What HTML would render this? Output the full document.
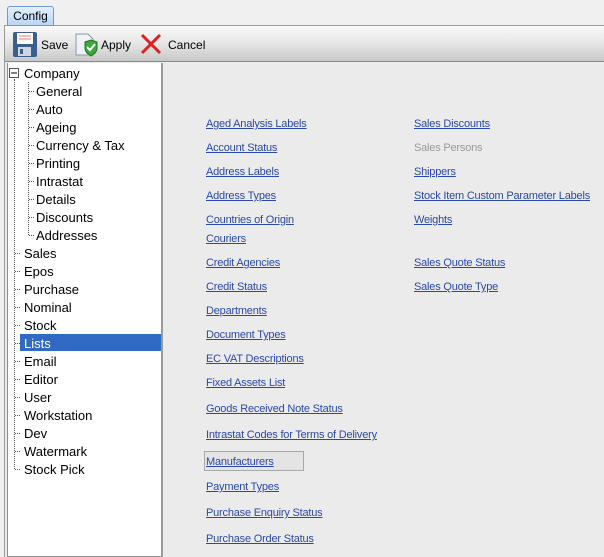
<!DOCTYPE html>
<html><head><style>
*{margin:0;padding:0;box-sizing:border-box}
body{width:604px;height:557px;background:#f0f0f0;font-family:"Liberation Sans","DejaVu Sans",sans-serif;position:relative;overflow:hidden}
.tab{position:absolute;left:7px;top:6px;width:47px;height:20px;border:1px solid #6f9bd0;border-radius:3px 3px 0 0;background:linear-gradient(#e3f0fd,#b9d6f6);font-size:12px;text-align:center;line-height:18px;color:#000}
.frame{position:absolute;left:4px;top:25px;width:600px;height:532px;border-top:1px solid #9a9a9a;border-left:1px solid #9a9a9a;background:#ebebeb}
.tb{position:absolute;left:5px;top:26px;width:599px;height:36px;background:linear-gradient(#fafafa,#e6e6e6 50%,#c8c8c8);border-bottom:1px solid #8a8a8a}
.tbt{position:absolute;top:38px;font-size:12px;color:#000}
.tree{position:absolute;left:7px;top:63px;width:156px;height:494px;background:#fff;border:1px solid #8f8f8f;border-top:none;border-right:2px solid #9a9a9a}
.ti{position:absolute;font-size:13px;color:#000;line-height:17px}
.sel{position:absolute;left:20px;top:334px;width:141px;height:17px;background:#316ac5}
.lk{position:absolute;font-size:11px;letter-spacing:-0.2px;color:#2a48a8;text-decoration:underline;white-space:nowrap}
.dot{position:absolute;border-left:1px dotted #555}
.hd{position:absolute;border-top:1px dotted #555;width:5px}
</style></head><body>
<div class="frame"></div>
<div class="tab">Config</div>
<div class="tb"></div>
<svg style="position:absolute;left:12px;top:31px" width="26" height="27" viewBox="0 0 26 27"><rect x="1" y="1" width="24" height="25" rx="2" fill="#3c5e8c"/><rect x="5" y="2" width="16" height="11" fill="#fff"/><line x1="7" y1="5" x2="19" y2="5" stroke="#e77" /><line x1="7" y1="8" x2="19" y2="8" stroke="#e77"/><rect x="6" y="16" width="13" height="9" fill="#cfd6de"/><rect x="8" y="18" width="3" height="5" fill="#3c5e8c"/></svg>
<div class="tbt" style="left:41px">Save</div>
<svg style="position:absolute;left:73px;top:31px" width="26" height="26" viewBox="0 0 26 26"><path d="M3 3h12l5 5v16H3z" fill="#eef2f6" stroke="#8a97a8"/><path d="M12 11l6-2 6 2v6c0 4-3 6-6 8-3-2-6-4-6-8z" fill="#3aa83a" stroke="#207020"/><path d="M14 16l3 3 5-6" stroke="#fff" stroke-width="2" fill="none"/></svg>
<div class="tbt" style="left:101px">Apply</div>
<svg style="position:absolute;left:140px;top:33px" width="22" height="22" viewBox="0 0 22 22"><path d="M2 2L20 20M20 2L2 20" stroke="#e02020" stroke-width="3"/></svg>
<div class="tbt" style="left:168px">Cancel</div>
<div class="tree"></div>
<div class="sel"></div>
<svg style="position:absolute;left:9px;top:68px" width="11" height="11"><rect x="0.5" y="0.5" width="9" height="9" fill="#fff" stroke="#555"/><line x1="2" y1="5" x2="8" y2="5" stroke="#000"/></svg>
<div class="dot" style="left:14px;top:79px;height:390px"></div>
<div class="dot" style="left:28px;top:82px;height:153px"></div>
<div class="ti" style="left:24px;top:65px">Company</div>
<div class="ti" style="left:36px;top:83px">General</div>
<div class="ti" style="left:36px;top:101px">Auto</div>
<div class="ti" style="left:36px;top:119px">Ageing</div>
<div class="ti" style="left:36px;top:137px">Currency &amp; Tax</div>
<div class="ti" style="left:36px;top:155px">Printing</div>
<div class="ti" style="left:36px;top:173px">Intrastat</div>
<div class="ti" style="left:36px;top:191px">Details</div>
<div class="ti" style="left:36px;top:209px">Discounts</div>
<div class="ti" style="left:36px;top:227px">Addresses</div>
<div class="hd" style="left:29px;top:91px"></div><div class="hd" style="left:29px;top:109px"></div><div class="hd" style="left:29px;top:127px"></div><div class="hd" style="left:29px;top:145px"></div><div class="hd" style="left:29px;top:163px"></div><div class="hd" style="left:29px;top:181px"></div><div class="hd" style="left:29px;top:199px"></div><div class="hd" style="left:29px;top:217px"></div><div class="hd" style="left:29px;top:235px"></div>
<div class="hd" style="left:15px;top:253px"></div><div class="hd" style="left:15px;top:271px"></div><div class="hd" style="left:15px;top:289px"></div><div class="hd" style="left:15px;top:307px"></div><div class="hd" style="left:15px;top:325px"></div><div class="hd" style="left:15px;top:343px"></div><div class="hd" style="left:15px;top:361px"></div><div class="hd" style="left:15px;top:379px"></div><div class="hd" style="left:15px;top:397px"></div><div class="hd" style="left:15px;top:415px"></div><div class="hd" style="left:15px;top:433px"></div><div class="hd" style="left:15px;top:451px"></div><div class="hd" style="left:15px;top:469px"></div>
<div class="ti" style="left:24px;top:245px">Sales</div>
<div class="ti" style="left:24px;top:263px">Epos</div>
<div class="ti" style="left:24px;top:281px">Purchase</div>
<div class="ti" style="left:24px;top:299px">Nominal</div>
<div class="ti" style="left:24px;top:317px">Stock</div>
<div class="ti" style="left:24px;top:335px;color:#fff">Lists</div>
<div class="ti" style="left:24px;top:353px">Email</div>
<div class="ti" style="left:24px;top:371px">Editor</div>
<div class="ti" style="left:24px;top:389px">User</div>
<div class="ti" style="left:24px;top:407px">Workstation</div>
<div class="ti" style="left:24px;top:425px">Dev</div>
<div class="ti" style="left:24px;top:443px">Watermark</div>
<div class="ti" style="left:24px;top:461px">Stock Pick</div>
<div style="position:absolute;left:204px;top:451px;width:100px;height:20px;border:1px solid #a8a8a8;background:#e4e4e4"></div>
<div class="lk" style="left:206px;top:118px">Aged Analysis Labels</div>
<div class="lk" style="left:206px;top:142px">Account Status</div>
<div class="lk" style="left:206px;top:166px">Address Labels</div>
<div class="lk" style="left:206px;top:190px">Address Types</div>
<div class="lk" style="left:206px;top:214px">Countries of Origin</div>
<div class="lk" style="left:206px;top:233px">Couriers</div>
<div class="lk" style="left:206px;top:257px">Credit Agencies</div>
<div class="lk" style="left:206px;top:281px">Credit Status</div>
<div class="lk" style="left:206px;top:305px">Departments</div>
<div class="lk" style="left:206px;top:329px">Document Types</div>
<div class="lk" style="left:206px;top:353px">EC VAT Descriptions</div>
<div class="lk" style="left:206px;top:377px">Fixed Assets List</div>
<div class="lk" style="left:206px;top:403px">Goods Received Note Status</div>
<div class="lk" style="left:206px;top:429px">Intrastat Codes for Terms of Delivery</div>
<div class="lk" style="left:206px;top:456px">Manufacturers</div>
<div class="lk" style="left:206px;top:481px">Payment Types</div>
<div class="lk" style="left:206px;top:507px">Purchase Enquiry Status</div>
<div class="lk" style="left:206px;top:533px">Purchase Order Status</div>
<div class="lk" style="left:414px;top:118px">Sales Discounts</div>
<div class="lk" style="left:414px;top:142px;color:#999;text-decoration:none">Sales Persons</div>
<div class="lk" style="left:414px;top:166px">Shippers</div>
<div class="lk" style="left:414px;top:190px">Stock Item Custom Parameter Labels</div>
<div class="lk" style="left:414px;top:214px">Weights</div>
<div class="lk" style="left:414px;top:257px">Sales Quote Status</div>
<div class="lk" style="left:414px;top:281px">Sales Quote Type</div>
</body></html>
